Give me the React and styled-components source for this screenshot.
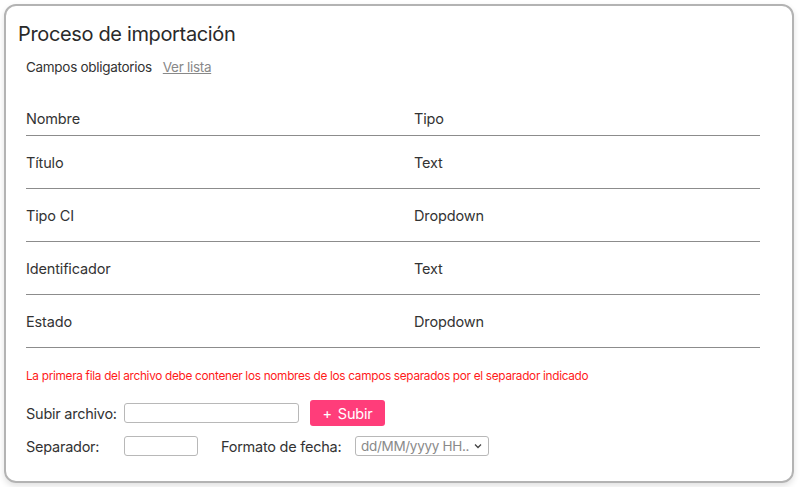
import React from "react";
import styled, { createGlobalStyle } from "styled-components";

const Global = createGlobalStyle`
  html, body { margin: 0; padding: 0; background: #fff; }
  body { font-family: "Inter", "Liberation Sans", sans-serif; color: #333; }
  * { box-sizing: border-box; }
`;

const Card = styled.div`
  margin: 4px;
  width: 790px;
  height: 479px;
  border: 2px solid #b3b3b3;
  border-radius: 12px;
  box-shadow: 0 3px 6px rgba(0, 0, 0, 0.12);
  padding: 16px 12px 0 12px;
  display: flex;
  flex-direction: column;
`;

const Title = styled.h1`
  margin: 0;
  font-size: 20px;
  font-weight: 400;
  line-height: 24px;
  color: #2a2a2a;
  letter-spacing: -0.35px;
`;

const Body = styled.div`
  padding: 0 8px;
  display: flex;
  flex-direction: column;
`;

const Required = styled.div`
  margin-top: 11px;
  display: flex;
  gap: 11px;
  font-size: 13.5px;
  line-height: 20px;
  letter-spacing: -0.3px;
`;

const Link = styled.a`
  color: #888;
  text-decoration: underline;
  cursor: pointer;
`;

const Table = styled.div`
  margin-top: 24px;
  width: 734px;
  display: flex;
  flex-direction: column;
`;

const Row = styled.div`
  display: grid;
  grid-template-columns: 388px 1fr;
  align-items: center;
  height: ${(p) => (p.$head ? "35px" : "53px")};
  padding-top: ${(p) => (p.$head ? "0" : "1px")};
  border-bottom: 1px solid #8c8c8c;
  font-size: 14.5px;
  letter-spacing: -0.15px;
  color: #333;
`;

const Warning = styled.div`
  margin-top: 20px;
  font-size: 11.8px;
  line-height: 16px;
  letter-spacing: -0.3px;
  color: #ff1a1a;
`;

const FormRow = styled.div`
  display: flex;
  align-items: center;
  height: ${(p) => p.$h || "26px"};
  margin-top: ${(p) => p.$mt || "0"};
  font-size: 14.5px;
  letter-spacing: -0.25px;
`;

const Label = styled.label`
  width: ${(p) => p.$w || "auto"};
  flex: none;
  margin-left: ${(p) => p.$ml || "0"};
  color: #333;
`;

const Input = styled.input`
  width: ${(p) => p.$w};
  height: 20px;
  border: 1px solid #b8b8b8;
  border-radius: 3px;
  outline: none;
  padding: 0 4px;
  font-family: inherit;
`;

const Button = styled.button`
  margin-left: 11px;
  height: 26px;
  width: 75px;
  border: none;
  border-radius: 3px;
  background: #ff3d7a;
  color: #fff;
  font-family: inherit;
  font-size: 14.5px;
  letter-spacing: -0.2px;
  display: flex;
  align-items: center;
  justify-content: center;
  gap: 6px;
  padding: 0;
`;

const Select = styled.div`
  width: 134px;
  height: 20px;
  border: 1px solid #b8b8b8;
  border-radius: 3px;
  display: flex;
  align-items: center;
  justify-content: space-between;
  padding: 0 5px 0 5px;
  font-size: 13.5px;
  letter-spacing: -0.3px;
  color: #8a8a8a;
  white-space: nowrap;
  overflow: hidden;
`;

const rows = [
  ["Título", "Text"],
  ["Tipo CI", "Dropdown"],
  ["Identificador", "Text"],
  ["Estado", "Dropdown"],
];

export default function App() {
  return (
    <>
      <Global />
      <Card>
        <Title>Proceso de importación</Title>
        <Body>
          <Required>
            <span>Campos obligatorios</span>
            <Link>Ver lista</Link>
          </Required>
          <Table>
            <Row $head>
              <span>Nombre</span>
              <span>Tipo</span>
            </Row>
            {rows.map(([n, t]) => (
              <Row key={n}>
                <span>{n}</span>
                <span>{t}</span>
              </Row>
            ))}
          </Table>
          <Warning>
            La primera fila del archivo debe contener los nombres de los campos separados por el separador indicado
          </Warning>
          <FormRow $mt="16px">
            <Label $w="98px">Subir archivo:</Label>
            <Input $w="175px" />
            <Button>
              <span>+</span>
              <span>Subir</span>
            </Button>
          </FormRow>
          <FormRow $mt="7px">
            <Label $w="98px">Separador:</Label>
            <Input $w="74px" />
            <Label $ml="23px" $w="134px">Formato de fecha:</Label>
            <Select>
              <span>dd/MM/yyyy HH..</span>
              <svg width="10" height="10" viewBox="0 0 10 10">
                <path d="M2 3.5 L5 6.5 L8 3.5" fill="none" stroke="#444" strokeWidth="1.3" />
              </svg>
            </Select>
          </FormRow>
        </Body>
      </Card>
    </>
  );
}
